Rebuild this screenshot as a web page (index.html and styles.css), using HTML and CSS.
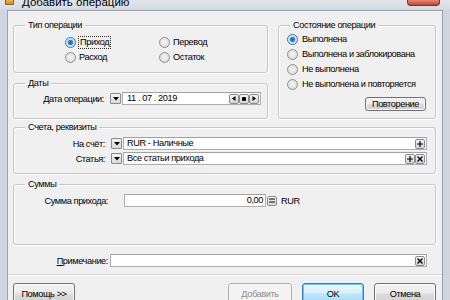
FILE: index.html
```html
<!DOCTYPE html>
<html lang="ru">
<head>
<meta charset="utf-8">
<link rel="stylesheet" href="styles.css">
</head>
<body>
<div class="win">
  <div class="titlebar">
    <span class="appicon"></span>
    <span class="ttl">Добавить операцию</span>
    <span class="close"></span>
  </div>
  <div class="frame">
    <div class="client">
      <div class="toprow">
        <div class="leftcol">
          <fieldset class="g g-type">
            <legend>Тип операции</legend>
            <div class="types">
              <span class="rb"><span class="dot on"></span><span class="focus">Приход</span></span>
              <span class="rb"><span class="dot"></span>Перевод</span>
              <span class="rb"><span class="dot"></span>Расход</span>
              <span class="rb"><span class="dot"></span>Остаток</span>
            </div>
          </fieldset>
          <fieldset class="g g-dates">
            <legend>Даты</legend>
            <div class="frow">
              <span class="lbl l-date">Дата операции:</span>
              <span class="dd"><svg width="6" height="4" viewBox="0 0 6 4"><path d="M0 0H6L3 3.5Z" fill="#000"/></svg></span>
              <span class="field date">
                <span class="dtext">11 . 07 . 2019</span>
                <span class="navs">
                  <span class="nb"><svg width="4" height="5" viewBox="0 0 4 5"><path d="M3.5 0V5L0 2.5Z" fill="#000"/></svg></span>
                  <span class="nb"><svg width="4" height="4" viewBox="0 0 4 4"><rect width="4" height="4" rx="1" fill="#000"/></svg></span>
                  <span class="nb"><svg width="4" height="5" viewBox="0 0 4 5"><path d="M0.5 0V5L4 2.5Z" fill="#000"/></svg></span>
                </span>
              </span>
            </div>
          </fieldset>
        </div>
        <fieldset class="g g-state">
          <legend>Состояние операции</legend>
          <div class="states">
            <span class="rb"><span class="dot on"></span>Выполнена</span>
            <span class="rb"><span class="dot"></span>Выполнена и заблокирована</span>
            <span class="rb"><span class="dot"></span>Не выполнена</span>
            <span class="rb"><span class="dot"></span>Не выполнена и повторяется</span>
          </div>
          <div class="rep-wrap"><button class="btn rep">Повторение</button></div>
        </fieldset>
      </div>

      <fieldset class="g g-acc">
        <legend>Счета, реквизиты</legend>
        <div class="frow">
          <span class="lbl l-acc">На счёт:</span>
          <span class="dd"><svg width="6" height="4" viewBox="0 0 6 4"><path d="M0 0H6L3 3.5Z" fill="#000"/></svg></span>
          <span class="field wide">
            <span class="ftext">RUR - Наличные</span>
            <span class="sb"><svg width="6" height="6" viewBox="0 0 6 6"><path d="M3 0V6M0 3H6" stroke="#000" stroke-width="1.2"/></svg></span>
          </span>
        </div>
        <div class="frow">
          <span class="lbl l-acc">Статья:</span>
          <span class="dd"><svg width="6" height="4" viewBox="0 0 6 4"><path d="M0 0H6L3 3.5Z" fill="#000"/></svg></span>
          <span class="field wide">
            <span class="ftext">Все статьи прихода</span>
            <span class="sb"><svg width="6" height="6" viewBox="0 0 6 6"><path d="M3 0V6M0 3H6" stroke="#000" stroke-width="1.2"/></svg></span>
            <span class="sb"><svg width="6" height="6" viewBox="0 0 6 6"><path d="M0.5 0.5L5.5 5.5M5.5 0.5L0.5 5.5" stroke="#000" stroke-width="1.4"/></svg></span>
          </span>
        </div>
      </fieldset>

      <fieldset class="g g-sum">
        <legend>Суммы</legend>
        <div class="frow">
          <span class="lbl l-sum">Сумма прихода:</span>
          <span class="field amount">0,00</span>
          <span class="sb calc"><svg width="6" height="5" viewBox="0 0 6 5"><path d="M0 1H6M0 4H6" stroke="#000" stroke-width="1.2"/></svg></span>
          <span class="cur">RUR</span>
        </div>
      </fieldset>

      <div class="frow note">
        <span class="lbl l-note"><u>П</u>римечание:</span>
        <span class="field notef">
          <span class="ftext"></span>
          <span class="sb"><svg width="6" height="6" viewBox="0 0 6 6"><path d="M0.5 0.5L5.5 5.5M5.5 0.5L0.5 5.5" stroke="#000" stroke-width="1.4"/></svg></span>
        </span>
      </div>

      <div class="sep"></div>

      <div class="btns">
        <button class="btn help">Помощь &gt;&gt;</button>
        <span class="spacer"></span>
        <button class="btn dis"><u>Д</u>обавить</button>
        <button class="btn ok">OK</button>
        <button class="btn">Отмена</button>
      </div>
    </div>
  </div>
</div>
</body>
</html>
```

FILE: styles.css
```css
* { box-sizing: border-box; }
html, body { margin: 0; padding: 0; }
body {
  width: 450px;
  height: 300px;
  overflow: hidden;
  background: #cfd6df;
  font-family: "Liberation Sans", Arial, sans-serif;
  font-size: 9.2px;
  letter-spacing: -0.4px;
  color: #000;
}
.win { width: 450px; height: 300px; display: flex; flex-direction: column; overflow: hidden; }

.titlebar {
  height: 9px;
  flex: none;
  display: flex;
  align-items: flex-start;
  background: linear-gradient(#e2e6eb, #d6dce3);
  overflow: hidden;
}
.appicon {
  width: 9px; height: 5px; margin-left: 5px; margin-top: 0;
  background: linear-gradient(#f2b640, #d98a1c);
  border: 1px solid #9a6215; border-top: 0;
}
.ttl { margin-left: 8px; margin-top: -5px; font-size: 11.5px; line-height: 14px; letter-spacing: 0; }
.close {
  margin-left: auto; margin-right: 10px;
  width: 33px; height: 6px;
  background: linear-gradient(#e08a76, #c7432c);
  border: 1px solid #7e2e22; border-top: 0;
  border-radius: 0 0 4px 4px;
}

.frame {
  flex: 1;
  min-height: 0;
  display: flex;
  padding: 1px 7px 0 7px;
  background: #cfd6df;
}
.client {
  flex: 1;
  background: #f0f0f0;
  border-left: 1px solid #9aa3ad;
  border-right: 1px solid #9aa3ad;
  border-top: 1px solid #9aa3ad;
  padding: 8px 6px 0 5px;
  display: flex;
  flex-direction: column;
  overflow: hidden;
}
.client > * { flex: none; }

.g {
  margin: 0;
  padding: 0;
  min-width: 0;
  border: 1px solid #c6c6c6;
  border-radius: 3px;
  box-shadow: inset 1px 1px #fff, 1px 1px #fff;
}
.g > legend {
  margin-left: 11px;
  padding: 0 3px;
  font-size: 9.2px;
  line-height: 12px;
}

.toprow { display: flex; gap: 10px; }
.leftcol { width: 255px; display: flex; flex-direction: column; gap: 4px; }
.leftcol > * { flex: none; }
.g-type { height: 54px; }
.g-dates { height: 42px; }
.g-state { flex: 1; height: 100px; }

.types {
  display: grid;
  grid-template-columns: 94px 90px;
  row-gap: 3px;
  padding: 5px 0 0 51px;
}
.states {
  display: grid;
  row-gap: 3px;
  padding: 2px 0 0 8px;
}
.rb { display: flex; align-items: center; gap: 3px; height: 12px; white-space: nowrap; }
.states .rb { gap: 4px; }
.dot {
  width: 11px; height: 11px; border-radius: 50%;
  border: 1px solid #8e8f8f;
  background: radial-gradient(circle at 50% 45%, #f4f4f4 0, #e2e2e2 60%, #cfcfcf 100%);
  flex: none;
}
.dot.on {
  border-color: #3f6e9a;
  background: radial-gradient(circle at 50% 50%, #1f66b3 0, #2f86d2 2.2px, #cde6f7 3.2px, #e8f3fb 100%);
}
.focus { outline: 1px dotted #333; outline-offset: 0; padding: 0 1px; line-height: 11px; }

.rep-wrap { display: flex; justify-content: flex-end; padding: 7px 9px 0 0; }
.btn {
  font: inherit;
  letter-spacing: inherit;
  color: #000;
  height: 21px;
  padding: 0;
  border: 1px solid #707070;
  border-radius: 3px;
  background: linear-gradient(#f2f2f2 0, #ebebeb 48%, #dddddd 52%, #cfcfcf 100%);
  box-shadow: inset 0 0 0 1px #fbfbfb;
}
.btn.rep { width: 61px; height: 14px; line-height: 11px; }

.frow { display: flex; align-items: center; height: 13px; }
.lbl { text-align: right; flex: none; white-space: nowrap; }
.l-date { width: 90px; margin-right: 6px; }
.l-acc { width: 91px; margin-right: 6px; }
.l-sum { width: 94px; margin-right: 16px; }
.l-note { width: 95px; margin-right: 2px; }

.dd {
  width: 11px; height: 11px; flex: none;
  border: 1px solid #8a8a8a;
  border-radius: 1px;
  background: linear-gradient(#f3f3f3, #d9d9d9);
  display: flex; align-items: center; justify-content: center;
  margin-right: 1px;
}
.dd svg { display: block; }

.field {
  height: 13px;
  background: #fff;
  border: 1px solid #abadb3;
  border-top-color: #a0a2a8;
  display: flex; align-items: center;
  line-height: 11px;
}
.g-dates .frow { margin-top: 3px; }
.date { width: 139px; padding-left: 4px; }
.dtext { flex: 1; }
.navs { display: flex; gap: 0; margin-right: 1px; }
.nb, .sb {
  width: 10px; height: 10px; flex: none;
  border: 1px solid #8c8c8c;
  border-radius: 2px;
  background: linear-gradient(#f4f4f4, #d6d6d6);
  display: flex; align-items: center; justify-content: center;
}
.nb svg, .sb svg { display: block; }

.g-acc { height: 53px; margin-top: 2px; }
.g-acc .frow:first-of-type { margin-top: 4px; }
.g-acc .frow + .frow { margin-top: 2px; }
.wide { width: 304px; padding-left: 3px; gap: 0; }
.ftext { flex: 1; }
.wide .sb:last-child, .notef .sb:last-child { margin-right: 1px; }

.g-sum { height: 67px; margin-top: 4px; }
.g-sum .frow { margin-top: 4px; }
.amount { width: 142px; justify-content: flex-end; padding-right: 2px; }
.calc { margin-left: 1px; }
.cur { margin-left: 4px; }

.note { margin-top: 9px; }
.notef { width: 317px; padding-left: 3px; }

.sep { height: 2px; margin-top: 7px; border-top: 1px solid #d5d5d5; border-bottom: 1px solid #fff; margin-left: -5px; margin-right: -6px; }

.btns { display: flex; gap: 10px; margin-top: 7px; }
.spacer { flex: 1; }
.btns .btn { width: 62px; }
.btn.dis {
  color: #8d8d8d;
  border-color: #adb2b5;
  background: #f4f4f4;
  box-shadow: none;
  width: 64px;
}
.btn.ok {
  border-color: #3c7fb1;
  background: linear-gradient(#eaf6fd 0, #d9f0fc 48%, #bee6fd 52%, #a7d9f5 100%);
  box-shadow: inset 0 0 0 1px #61c8f5;
}
.btn u { text-decoration: underline; }
```
